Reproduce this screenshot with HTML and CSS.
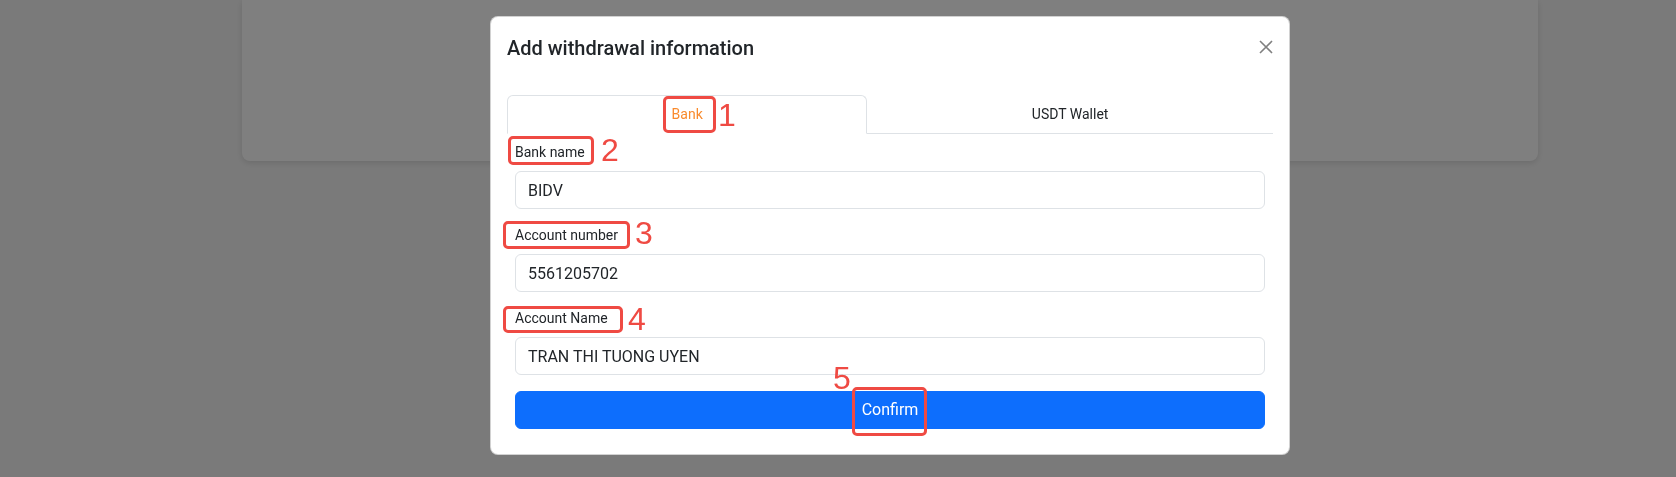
FILE: index.html
```
<!DOCTYPE html>
<html>
<head>
    <meta charset="utf-8">
    <title>Add withdrawal information</title>
    <link rel="stylesheet" href="styles.css">
</head>
<body>

    <div class="page">
        <div class="card"></div>
    </div>

    <div class="backdrop"></div>

    <div class="modal">
        <div class="dialog">
            <div class="content">
                <div class="header">
                    <h5 class="title">Add withdrawal information</h5>
                    <button class="close" type="button" aria-label="Close">
                        <svg width="14" height="14" viewBox="0 0 14 14">
                            <path d="M1 1 L13 13 M13 1 L1 13" stroke="#808080" stroke-width="1.6" fill="none"/>
                        </svg>
                    </button>
                </div>

                <div class="body">
                    <ul class="tabs">
                        <li class="tab-item"><a class="tab active">Bank</a></li>
                        <li class="tab-item"><a class="tab">USDT Wallet</a></li>
                    </ul>

                    <form class="form">
                        <div class="group">
                            <label class="label">Bank name</label>
                            <input class="field" type="text" value="BIDV" readonly>
                        </div>
                        <div class="group">
                            <label class="label">Account number</label>
                            <input class="field" type="text" value="5561205702" readonly>
                        </div>
                        <div class="group">
                            <label class="label">Account Name</label>
                            <input class="field" type="text" value="TRAN THI TUONG UYEN" readonly>
                        </div>
                        <button class="confirm" type="button">Confirm</button>
                    </form>
                </div>

                <!-- annotation marks -->
                <div class="mark mark-1"></div>
                <div class="num num-1">1</div>
                <div class="mark mark-2"></div>
                <div class="num num-2">2</div>
                <div class="mark mark-3"></div>
                <div class="num num-3">3</div>
                <div class="mark mark-4"></div>
                <div class="num num-4">4</div>
                <div class="mark mark-5"></div>
                <div class="num num-5">5</div>
            </div>
        </div>
    </div>

</body>
</html>
```

FILE: styles.css
```
* {
    box-sizing: border-box;
}

html {
    height: 100%;
}

body {
    margin: 0;
    height: 100%;
    background: #f5f5f5;
    font-family: Roboto, "Liberation Sans", sans-serif;
    color: #212529;
    overflow: hidden;
}

.page {
    padding-left: 242px;
}

.card {
    width: 1296px;
    height: 161px;
    background: white;
    border-radius: 0 0 8px 8px;
    box-shadow: 0 2px 6px rgba(0, 0, 0, 0.12);
}

.backdrop {
    position: fixed;
    top: 0;
    left: 0;
    right: 0;
    bottom: 0;
    background: rgba(0, 0, 0, 0.5);
}

.modal {
    position: fixed;
    top: 0;
    left: 0;
    right: 0;
    bottom: 0;
}

.dialog {
    width: 800px;
    margin: 16px 0 0 490px;
}

.content {
    position: relative;
    background: white;
    border: 1px solid rgba(0, 0, 0, 0.175);
    border-radius: 8px;
}

.header {
    display: flex;
    align-items: center;
    justify-content: space-between;
    padding: 16px;
}

.title {
    margin: 0;
    font-size: 20px;
    font-weight: 500;
    line-height: 1.5;
}

.close {
    display: flex;
    padding: 0;
    margin-top: -2px;
    border: 0;
    background: none;
}

.body {
    padding: 16px 16px 17px;
}

.tabs {
    display: flex;
    margin: 0;
    padding: 0;
    list-style: none;
    border-bottom: 1px solid #dee2e6;
}

.tab-item {
    flex: 1 1 auto;
    text-align: center;
}

.tab {
    display: block;
    padding: 8px 16px;
    margin-bottom: -1px;
    font-size: 14px;
    line-height: 21px;
    color: #212529;
    border: 1px solid transparent;
    border-radius: 6px 6px 0 0;
}

.tab.active {
    color: #f98a2c;
    background: white;
    border-color: #dee2e6 #dee2e6 white;
}

.form {
    padding: 8px;
}

.group {
    margin-bottom: 16px;
}

.label {
    display: block;
    margin-bottom: 8px;
    font-size: 14px;
    line-height: 21px;
}

.field {
    display: block;
    width: 100%;
    height: 38px;
    padding: 6px 12px;
    font-family: Roboto, "Liberation Sans", sans-serif;
    font-size: 16px;
    line-height: 24px;
    color: #212529;
    background: white;
    border: 1px solid #dee2e6;
    border-radius: 6px;
    outline: none;
}

.confirm {
    display: block;
    width: 100%;
    height: 38px;
    padding: 6px 12px;
    font-family: Roboto, "Liberation Sans", sans-serif;
    font-size: 16px;
    line-height: 24px;
    color: white;
    background: #0d6efd;
    border: 1px solid #0d6efd;
    border-radius: 6px;
}

/* red annotation boxes and numbers */
.mark {
    position: absolute;
    border: 3px solid #ef4a43;
    border-radius: 5px;
}

.mark-1 { left: 172px; top: 79px; width: 53px; height: 37px; }
.mark-2 { left: 17px; top: 119px; width: 86px; height: 29px; }
.mark-3 { left: 12px; top: 204px; width: 127px; height: 28px; }
.mark-4 { left: 12px; top: 289px; width: 120px; height: 27px; }
.mark-5 { left: 361px; top: 370px; width: 75px; height: 49px; }

.num {
    position: absolute;
    font-family: "Liberation Sans", sans-serif;
    font-size: 32px;
    line-height: 32px;
    color: #ef4a43;
}

.num-1 { left: 227px; top: 82px; }
.num-2 { left: 110px; top: 117px; }
.num-3 { left: 144px; top: 200px; }
.num-4 { left: 137px; top: 286px; }
.num-5 { left: 342px; top: 345px; }
```
